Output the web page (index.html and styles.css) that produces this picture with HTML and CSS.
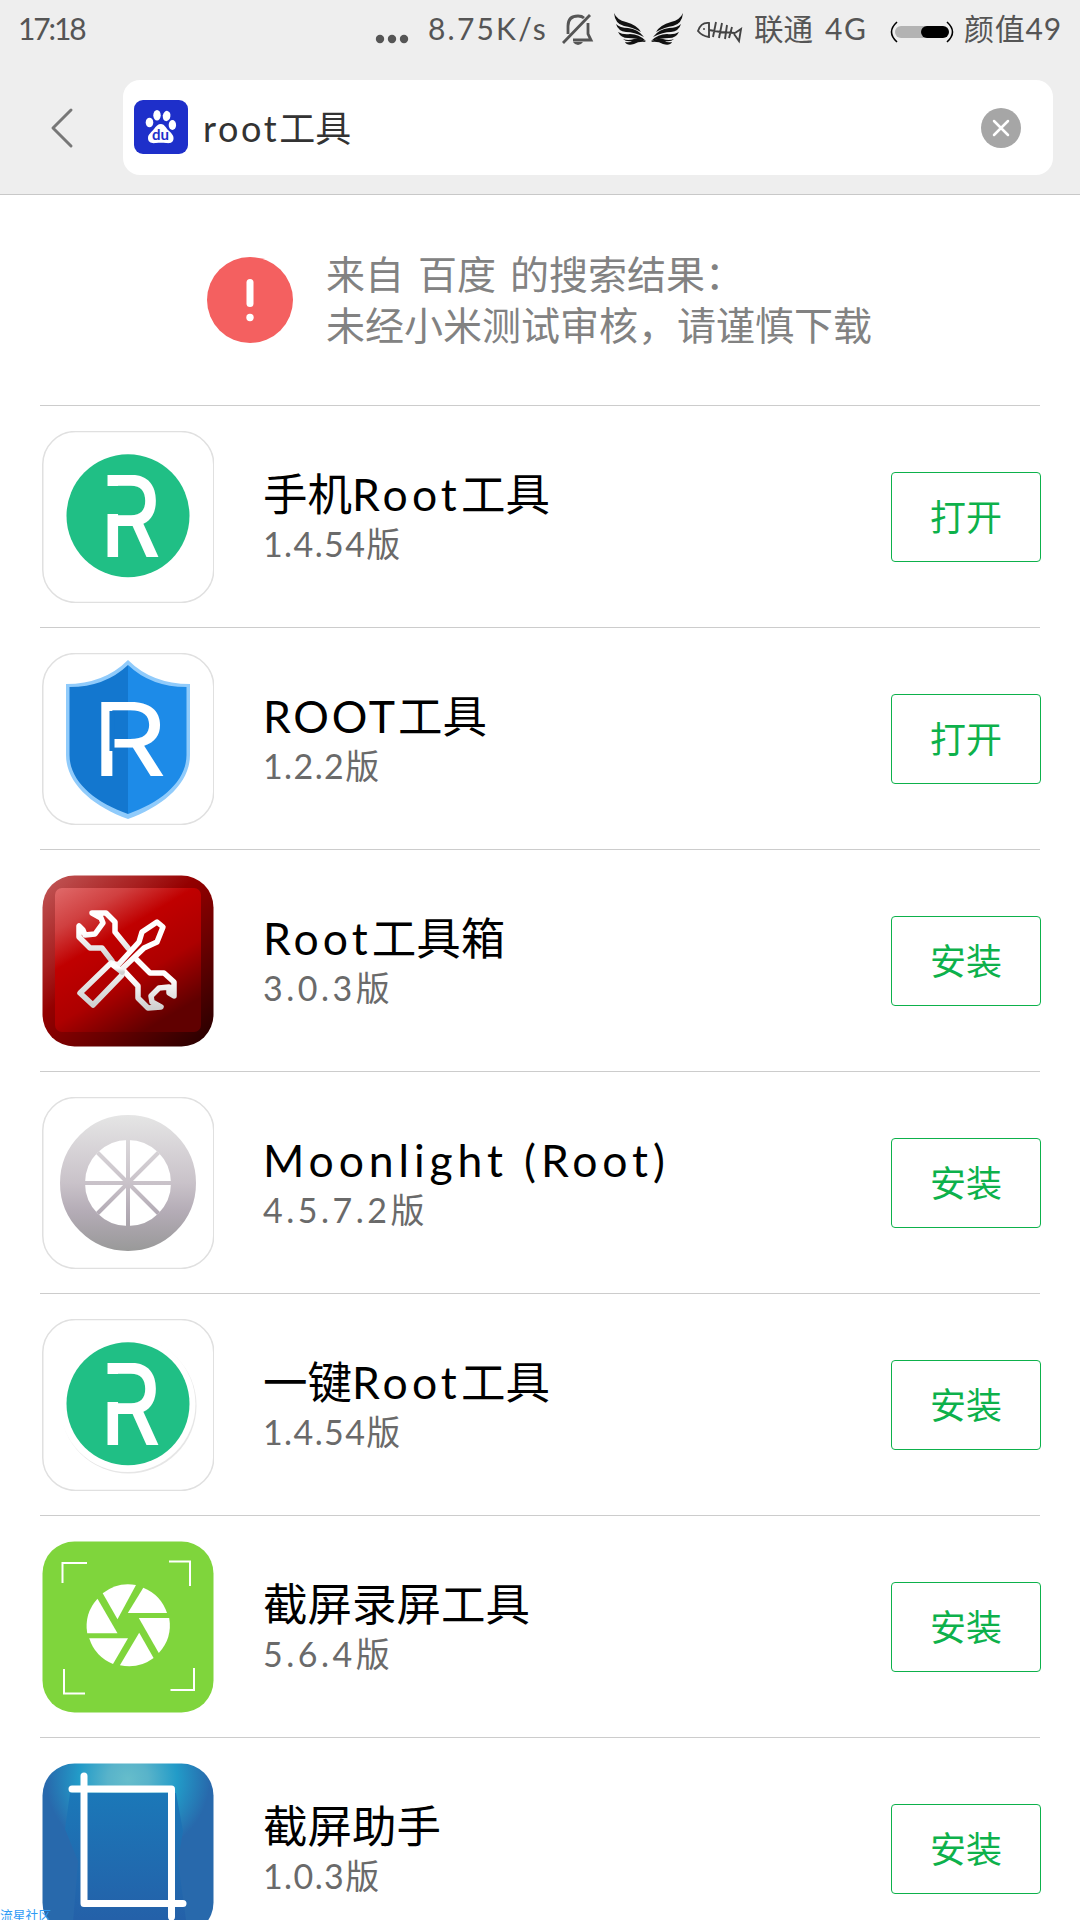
FILE: index.html
```html
<!DOCTYPE html>
<html lang="zh-CN">
<head>
    <meta charset="UTF-8">
    <meta name="viewport" content="width=device-width, initial-scale=1.0">
    <title>root工具</title>
    <link rel="stylesheet" href="styles.css">
</head>
<body>

    <header class="header">
        <div class="status-bar">
            <span class="time">17:18</span>
            <svg class="dots" width="34" height="60" viewBox="0 0 34 60" fill="#555">
                <circle cx="5" cy="39" r="4.2"/><circle cx="17" cy="39" r="4.2"/><circle cx="29" cy="39" r="4.2"/>
            </svg>
            <span class="speed">8.75K/s</span>
            <svg class="bell" width="32" height="60" viewBox="0 0 32 60" fill="none" stroke="#555" stroke-width="2.8">
                <path d="M6 34V26Q6 16 16 16Q20 16 22 18M26 23V34L29 40H11M1 43L28 15"/>
                <path d="M11 42H21Q19 45 16 45T11 42Z" fill="#555" stroke="none"/>
            </svg>
            <svg class="wings" width="70" height="60" viewBox="0 0 70 60" fill="#111">
                <g id="wing">
                    <path d="M0 13Q3 20 12 22Q23 25 27 32Q18 27 10 26Q1 24 0 13Z"/>
                    <path d="M2 24Q6 28 14 28Q24 29 30 37Q20 32 12 32Q4 31 2 24Z"/>
                    <path d="M4 32Q9 35 16 34Q25 34 32 41Q22 38 14 38Q7 38 4 32Z"/>
                    <path d="M9 39Q14 41 20 39Q27 38 32 42Q25 41 20 44Q13 46 11 42Q16 43 18 41Q12 42 9 39Z"/>
                </g>
                <use href="#wing" transform="matrix(-1 0 0 1 69 0)"/>
            </svg>
            <svg class="fish" width="46" height="60" viewBox="0 0 46 60" fill="none" stroke="#444" stroke-width="1.9">
                <path d="M12 23Q4 22 1 31Q5 36 12 37ZM12 30Q25 33 38 33M19 22L16 37M25 23L22 38M30 25L28 39M35 27L32 38M38 33L44 29L42 41L37 34"/>
                <circle cx="7" cy="29" r="1" fill="#444" stroke="none"/>
            </svg>
            <span class="carrier">联通</span>
            <span class="network">4G</span>
            <svg class="battery" width="66" height="60" viewBox="0 0 66 60">
                <rect x="6" y="26" width="50" height="12" rx="6" fill="#b3b3b3"/>
                <rect x="32" y="26" width="28" height="12" rx="6" fill="#000"/>
                <path d="M8 22Q-3 32 8 42M58 22Q69 32 58 42" fill="none" stroke="#000" stroke-width="1.6"/>
            </svg>
            <span class="level">颜值49</span>
        </div>

        <div class="search-bar">
            <svg class="back" width="24" height="42" viewBox="0 0 24 42" fill="none" stroke="#777" stroke-width="3" stroke-linecap="round" stroke-linejoin="round">
                <path d="M21 3L3 21L21 39"/>
            </svg>
            <div class="search-box">
                <svg class="baidu" width="54" height="54" viewBox="0 0 54 54">
                    <rect width="54" height="54" rx="9" fill="#1e2fca"/>
                    <g fill="#fff">
                        <ellipse cx="15.5" cy="22.5" rx="3.8" ry="4.8"/>
                        <ellipse cx="23" cy="15.3" rx="3.7" ry="5.2"/>
                        <ellipse cx="32.6" cy="16" rx="3.8" ry="5.2" transform="rotate(10 32.6 16)"/>
                        <ellipse cx="38.4" cy="25" rx="3.7" ry="4.9"/>
                        <path d="M27 24C30 24 31.500 27 34 30C37 33 40 35 39.500 39C39 43 35.500 43.500 32 43C29 42.500 25 42.500 22 43C17 43.700 14 42 14 38C14 34 18 32 20 29C22 26 24 24 27 24Z"/>
                    </g>
                    <text class="du" x="26.500" y="40" text-anchor="middle">du</text>
                </svg>
                <span class="query"><span class="word">root</span>工具</span>
                <svg class="clear" width="40" height="40" viewBox="0 0 40 40">
                    <circle cx="20" cy="20" r="20" fill="#a6a6a6"/>
                    <path d="M13 13L27 27M27 13L13 27" stroke="#fff" stroke-width="2.5" stroke-linecap="round"/>
                </svg>
            </div>
        </div>
    </header>

    <div class="notice">
        <svg width="86" height="86" viewBox="0 0 86 86">
            <circle cx="43" cy="43" r="43" fill="#f46060"/>
            <path d="M43 25.500V46.500" stroke="#fff" stroke-width="7" stroke-linecap="round"/>
            <circle cx="43" cy="60.500" r="3.700" fill="#fff"/>
        </svg>
        <p>来自 百度 的搜索结果：<br>未经小米测试审核，请谨慎下载</p>
    </div>

    <div class="list">
        <div class="item">
            <svg class="icon" viewBox="0 0 172 172">
                <rect class="frame" x="0.750" y="0.500" width="171" height="171" rx="33"/>
                <circle cx="86" cy="84.700" r="61.500" fill="#20bf85"/>
                <text class="mark" x="58" y="126" textLength="61" lengthAdjust="spacingAndGlyphs">R</text>
                <rect x="62" y="55" width="15" height="28" fill="#20bf85"/>
            </svg>
            <div class="info">
                <h3>手机<span class="en">Root</span>工具</h3>
                <p class="tight">1.4.54版</p>
            </div>
            <button>打开</button>
        </div>

        <div class="item">
            <svg class="icon" viewBox="0 0 172 172">
                <rect class="frame" x="0.750" y="0.500" width="171" height="171" rx="33"/>
                <path d="M86 7Q62 31 24 31V102C24 130 50 153 86 166C122 153 148 130 148 102V31Q110 31 86 7Z" fill="#90cbfb"/>
                <path d="M86 12Q63 34 27.500 34V102C27.500 128 52 149 86 161Z" fill="#1377cf"/>
                <path d="M86 12Q109 34 144.500 34V102C144.500 128 120 149 86 161Z" fill="#1d8be8"/>
                <text class="mark thin" x="49" y="123" textLength="76" lengthAdjust="spacingAndGlyphs">R</text>
                <rect x="67.500" y="58" width="5" height="40" fill="#1377cf"/>
            </svg>
            <div class="info">
                <h3><span class="en caps">ROOT</span>工具</h3>
                <p class="tight">1.2.2版</p>
            </div>
            <button>打开</button>
        </div>

        <div class="item">
            <svg class="icon" viewBox="0 0 172 172">
                <defs>
                    <linearGradient id="redEdge" x1="0" y1="0" x2="0.900" y2="1">
                        <stop offset="0" stop-color="#c35a5a"/>
                        <stop offset="0.300" stop-color="#a82020"/>
                        <stop offset="0.450" stop-color="#940000"/>
                        <stop offset="0.700" stop-color="#680000"/>
                        <stop offset="1" stop-color="#2c0000"/>
                    </linearGradient>
                    <linearGradient id="redFace" x1="0" y1="0" x2="0.600" y2="1">
                        <stop offset="0" stop-color="#e06a6a"/>
                        <stop offset="0.220" stop-color="#d04040"/>
                        <stop offset="0.420" stop-color="#c00000"/>
                        <stop offset="0.700" stop-color="#ad0000"/>
                        <stop offset="1" stop-color="#600000"/>
                    </linearGradient>
                    <linearGradient id="toolLine" x1="0" y1="0" x2="0" y2="1">
                        <stop offset="0.400" stop-color="#fff"/>
                        <stop offset="1" stop-color="#d0d0d0"/>
                    </linearGradient>
                </defs>
                <rect x="0.500" y="0.500" width="171" height="171" rx="32" fill="url(#redEdge)"/>
                <rect x="13" y="13" width="146" height="144" rx="7" fill="url(#redFace)"/>
                <g fill="none" stroke="url(#toolLine)" stroke-width="5.500" stroke-linejoin="round" stroke-linecap="round">
                    <path d="M86 73L73 57V47L64 38H50L59 43L61 48L53 59L43 60L41 55L37 51V62L48 73H60L70 86"/>
                    <path d="M93 83L108 98H122L132 107V121L127 118V112L117 113L109 121L110 127L119 132L106 133L96 123V111L82 96"/>
                    <path d="M115 47L121 52L115 67L102 73L80 94V100L51 130L38 118L69 88L76 90L97 67L100 57Z"/>
                    <path d="M71 90L80 97" />
                </g>
            </svg>
            <div class="info">
                <h3><span class="en">Root</span>工具箱</h3>
                <p>3.0.3版</p>
            </div>
            <button>安装</button>
        </div>

        <div class="item">
            <svg class="icon" viewBox="0 0 172 172">
                <defs>
                    <linearGradient id="moon" gradientUnits="userSpaceOnUse" x1="0" y1="18" x2="0" y2="154">
                        <stop offset="0" stop-color="#e5e5e5"/>
                        <stop offset="0.500" stop-color="#c9c2c9"/>
                        <stop offset="0.720" stop-color="#b3abb5"/>
                        <stop offset="1" stop-color="#999"/>
                    </linearGradient>
                </defs>
                <rect class="frame" x="0.750" y="0.500" width="171" height="171" rx="33"/>
                <g fill="none" stroke="url(#moon)">
                    <circle cx="86" cy="86" r="55.500" stroke-width="25"/>
                    <path d="M55.500 55.500L116.500 116.500M116.500 55.500L55.500 116.500" stroke-width="4"/>
                </g>
                <path d="M84 42H88V84H130V88H88V130H84V88H42V84H84Z" fill="url(#moon)"/>
            </svg>
            <div class="info">
                <h3><span class="en wide">Moonlight (Root)</span></h3>
                <p>4.5.7.2版</p>
            </div>
            <button>安装</button>
        </div>

        <div class="item">
            <svg class="icon" viewBox="0 0 172 172">
                <rect class="frame" x="0.750" y="0.500" width="171" height="171" rx="33"/>
                <circle cx="86.500" cy="86.500" r="68" fill="#e6e6e6"/>
                <circle cx="85.500" cy="85" r="68" fill="#fff"/>
                <circle cx="86" cy="84.700" r="61.500" fill="#20bf85"/>
                <text class="mark" x="58" y="126" textLength="61" lengthAdjust="spacingAndGlyphs">R</text>
                <rect x="62" y="55" width="15" height="28" fill="#20bf85"/>
            </svg>
            <div class="info">
                <h3>一键<span class="en">Root</span>工具</h3>
                <p class="tight">1.4.54版</p>
            </div>
            <button>安装</button>
        </div>

        <div class="item">
            <svg class="icon" viewBox="0 0 172 172">
                <rect x="0.500" y="0.500" width="171" height="171" rx="32" fill="#7fd53c"/>
                <g fill="none" stroke="#fff" stroke-width="2">
                    <path d="M20.500 42V22H45M127 20.500H148V45M22 128V152.500H43M128.500 149H152V127"/>
                </g>
                <g fill="#fff">
                    <path d="M60.700 52.300A41.500 41.500 0 0 1 94 44L75.500 78.300Z"/>
                    <path d="M101.300 46.700A41.500 41.500 0 0 1 125 72H85.800Z"/>
                    <path d="M96.800 77H127.200A41.500 41.500 0 0 1 116.800 112Z"/>
                    <path d="M97.200 91.700L111.600 117A41.500 41.500 0 0 1 77.900 124.300Z"/>
                    <path d="M86 97.300L71 123A41.500 41.500 0 0 1 47.200 97.300Z"/>
                    <path d="M75.500 92.300H45.200A41.500 41.500 0 0 1 55.500 57.700Z"/>
                </g>
            </svg>
            <div class="info">
                <h3>截屏录屏工具</h3>
                <p>5.6.4版</p>
            </div>
            <button>安装</button>
        </div>

        <div class="item">
            <svg class="icon" viewBox="0 0 172 172">
                <defs>
                    <radialGradient id="glow" gradientUnits="userSpaceOnUse" cx="86" cy="15" r="82" gradientTransform="translate(0 2) scale(1 0.950)">
                        <stop offset="0" stop-color="#66bdcb"/>
                        <stop offset="0.250" stop-color="#58b3ca"/>
                        <stop offset="0.600" stop-color="#229bc8"/>
                        <stop offset="1" stop-color="#2869ac"/>
                    </radialGradient>
                    <linearGradient id="sheet" x1="0" y1="0" x2="0" y2="1">
                        <stop offset="0" stop-color="#1b78b8"/>
                        <stop offset="1" stop-color="#255ea7"/>
                    </linearGradient>
                </defs>
                <rect x="0.500" y="0.500" width="171" height="171" rx="32" fill="url(#glow)"/>
                <path d="M28 30H134L141 68L136 98L146 172H30L36 98L23 66Z" fill="url(#sheet)"/>
                <g fill="none" stroke="#fff" stroke-width="7" stroke-linecap="round" stroke-linejoin="round">
                    <path d="M42 13V140.500H141M30 26H129.500V154"/>
                </g>
            </svg>
            <div class="info">
                <h3>截屏助手</h3>
                <p class="tight">1.0.3版</p>
            </div>
            <button>安装</button>
        </div>
    </div>

    <!-- Community tag over the bottom left corner -->
    <div class="watermark">流星社区</div>

</body>
</html>
```
FILE: styles.css
```css
* {
    box-sizing: border-box;
}
body {
    margin: 0;
    width: 1080px;
    height: 1920px;
    overflow: hidden;
    position: relative;
    background-color: #fff;
    font-family: Lato, "Noto Sans CJK SC", sans-serif;
}
svg {
    display: block;
    flex-shrink: 0;
}
h3, p {
    margin: 0;
    font-weight: 400;
}

/* Header */
.header {
    height: 195px;
    background-color: #eee;
    border-bottom: 1px solid #c8c8c8;
}
.status-bar {
    display: flex;
    height: 60px;
    padding-left: 18px;
    line-height: 57px;
    font-size: 30px;
    color: #555;
    white-space: nowrap;
}
.time {
    width: 357px;
    letter-spacing: -2.1px;
}
.dots {
    margin-right: 19px;
}
.speed {
    width: 134px;
    letter-spacing: 2.2px;
}
.bell {
    margin-right: 20px;
}
.wings {
    margin-right: 13px;
}
.fish {
    margin-right: 11px;
}
.carrier {
    width: 71px;
    font-size: 29.5px;
}
.network {
    width: 64px;
    letter-spacing: 1.5px;
}
.battery {
    margin-right: 9px;
}
.level {
    letter-spacing: 0.8px;
}
.search-bar {
    display: flex;
    align-items: center;
    height: 95px;
    margin-top: 20px;
    padding: 0 27px 0 50px;
}
.search-box {
    display: flex;
    flex: 1;
    align-items: center;
    height: 95px;
    margin-left: 49px;
    padding: 0 32px 0 11px;
    background-color: #fff;
    border-radius: 17px;
}
.baidu {
    margin-bottom: 2px;
}
.du {
    font: bold 15px Lato, sans-serif;
    fill: #1e2fca;
}
.query {
    flex: 1;
    padding: 0 0 4px 15px;
    font-size: 36px;
    color: #333;
}
.query .word {
    letter-spacing: 2.6px;
}

/* Notice */
.notice {
    display: flex;
    align-items: center;
    height: 210px;
    padding-left: 207px;
}
.notice p {
    padding-left: 33px;
    font-size: 39px;
    line-height: 51px;
    word-spacing: 4px;
    color: #828282;
}

/* App list */
.list {
    margin: 0 40px;
}
.item {
    display: flex;
    align-items: center;
    height: 222px;
    padding-left: 2px;
    border-top: 1px solid #ccc;
}
.icon {
    width: 172px;
    height: 172px;
}
.frame {
    fill: #fff;
    stroke: #e0e0e0;
    stroke-width: 1.5;
}
.mark {
    font: 500 113px Inter, sans-serif;
    fill: #fff;
}
.mark.thin {
    font-size: 102px;
    font-weight: 400;
}
.info {
    flex: 1;
    padding: 5px 0 0 49px;
    white-space: nowrap;
}
.info h3 {
    font-size: 44.5px;
    line-height: 50px;
    color: #000;
}
.info .en {
    letter-spacing: 4.1px;
}
.info .en.caps {
    letter-spacing: 2.8px;
}
.info .en.wide {
    letter-spacing: 4.9px;
}
.info p {
    font-size: 34px;
    line-height: 50px;
    letter-spacing: 3.5px;
    color: #6a6a6a;
}
.info p.tight {
    letter-spacing: 1.4px;
}
.item button {
    width: 150px;
    height: 90px;
    margin-right: -1px;
    padding: 0 0 3px;
    background-color: #fff;
    border: 1px solid #0db14b;
    border-radius: 4px;
    font-family: inherit;
    font-size: 36px;
    color: #0db14b;
}

.watermark {
    position: absolute;
    left: 0;
    bottom: -4px;
    font-size: 12.8px;
    line-height: 18px;
    color: #2f9bf5;
}
```
